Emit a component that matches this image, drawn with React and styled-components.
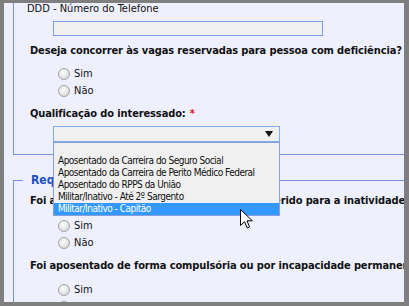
import React from "react";
import styled, { createGlobalStyle } from "styled-components";

const Global = createGlobalStyle`
  html, body {
    margin: 0;
    padding: 0;
  }
  body {
    background: #7f7f7f;
    font-family: "DejaVu Sans Condensed", "DejaVu Sans", sans-serif;
    font-size: 11px;
    color: #111;
  }
`;

const Frame = styled.div`
  width: 409px;
  height: 306px;
  box-sizing: border-box;
  padding: 3px 5px 4px 4px;
  background: #7f7f7f;
`;

const Page = styled.div`
  position: relative;
  height: 100%;
  overflow: hidden;
  background: #eef0fd;
  padding-left: 9px;
  box-sizing: border-box;
`;

const Fieldset = styled.fieldset`
  width: 420px;
  box-sizing: border-box;
  margin: ${p => (p.$top ? "0" : "19px 0 0")};
  padding: ${p => (p.$top ? "0 0 12px 16px" : "7px 0 0 16px")};
  border: 1px solid #7b90e2;
  border-top: ${p => (p.$top ? "none" : "1px solid #7b90e2")};
`;

const Legend = styled.legend`
  margin-left: -7px;
  padding: 0 8px;
  font-weight: bold;
  font-size: 12px;
  line-height: 13px;
  color: #1c4fc4;
`;

const Label = styled.div`
  margin-left: -3px;
  line-height: 12px;
`;

const Question = styled.div`
  font-weight: bold;
  line-height: 13px;
  letter-spacing: -0.12px;
  white-space: nowrap;
  margin-top: ${p => p.$mt ?? 8}px;
`;

const Req = styled.span`
  color: #e0201a;
  margin-left: 4px;
`;

const TextInput = styled.div`
  margin: 6px 0 0 23px;
  width: 270px;
  height: 15px;
  box-sizing: border-box;
  background: #f0f0f0;
  border: 1px solid #7b9be8;
`;

const RadioGroup = styled.div`
  margin: ${p => p.$mt ?? 8}px 0 0 28px;
`;

const RadioRow = styled.div`
  height: 17px;
  display: flex;
  align-items: center;
  gap: 4px;
`;

const Circle = styled.span`
  width: 12px;
  height: 12px;
  box-sizing: border-box;
  border-radius: 50%;
  border: 1px solid #a4a4a4;
  background: radial-gradient(circle at 40% 35%, #ffffff 0%, #e4e4e4 55%, #cccccc 100%);
`;

const SelectWrap = styled.div`
  position: relative;
  margin: 6px 0 0 23px;
  width: 227px;
`;

const SelectBox = styled.div`
  height: 16px;
  box-sizing: border-box;
  background: #f0f0f0;
  border: 1px solid #7eaee8;
  display: flex;
  align-items: center;
  justify-content: flex-end;
  padding-right: 6px;
`;

const List = styled.div`
  position: absolute;
  top: 100%;
  left: 0;
  width: 227px;
  box-sizing: border-box;
  background: #f0f0f0;
  border: 1px solid #8a9fd8;
  z-index: 2;
`;

const Option = styled.div`
  height: 12px;
  line-height: 12px;
  padding-left: 4px;
  font-size: 10px;
  letter-spacing: -0.5px;
  white-space: nowrap;
  color: ${p => (p.$active ? "#fff" : "#111")};
  background: ${p => (p.$active ? "#3399ff" : "transparent")};
`;

const Cursor = styled.svg`
  position: absolute;
  left: 236px;
  top: 206px;
  z-index: 3;
`;

const Radio = ({ label }) => (
  <RadioRow>
    <Circle />
    <span>{label}</span>
  </RadioRow>
);

const options = [
  "",
  "Aposentado da Carreira do Seguro Social",
  "Aposentado da Carreira de Perito Médico Federal",
  "Aposentado do RPPS da União",
  "Militar/Inativo - Até 2º Sargento",
  "Militar/Inativo - Capitão",
];

export default function App() {
  return (
    <>
      <Global />
      <Frame>
        <Page>
          <Fieldset $top>
            <Label>DDD - Número do Telefone</Label>
            <TextInput />
            <Question>Deseja concorrer às vagas reservadas para pessoa com deficiência?</Question>
            <RadioGroup $mt={8}>
              <Radio label="Sim" />
              <Radio label="Não" />
            </RadioGroup>
            <Question $mt={8}>
              Qualificação do interessado:<Req>*</Req>
            </Question>
            <SelectWrap>
              <SelectBox>
                <svg width="8" height="6" viewBox="0 0 8 6">
                  <path d="M0 0H8L4 6Z" fill="#111" />
                </svg>
              </SelectBox>
              <List>
                {options.map((o, i) => (
                  <Option key={i} $active={i === options.length - 1}>
                    {o}
                  </Option>
                ))}
              </List>
            </SelectWrap>
          </Fieldset>
          <Fieldset>
            <Legend>Requisitos da inatividade</Legend>
            <Question $mt={0}>Foi aposentado com tempo de exercício conferido para a inatividade?</Question>
            <RadioGroup $mt={10}>
              <Radio label="Sim" />
              <Radio label="Não" />
            </RadioGroup>
            <Question $mt={8}>Foi aposentado de forma compulsória ou por incapacidade permanente?</Question>
            <RadioGroup $mt={9}>
              <Radio label="Sim" />
              <Radio label="Não" />
            </RadioGroup>
          </Fieldset>
          <Cursor width="13" height="20" viewBox="0 0 13 20">
            <path
              d="M0.5 0.5V16.5L4.5 12.7L7.2 19L9.6 18L7 11.8H12.3Z"
              fill="#fff"
              stroke="#000"
              strokeWidth="1"
              strokeLinejoin="miter"
            />
          </Cursor>
        </Page>
      </Frame>
    </>
  );
}
